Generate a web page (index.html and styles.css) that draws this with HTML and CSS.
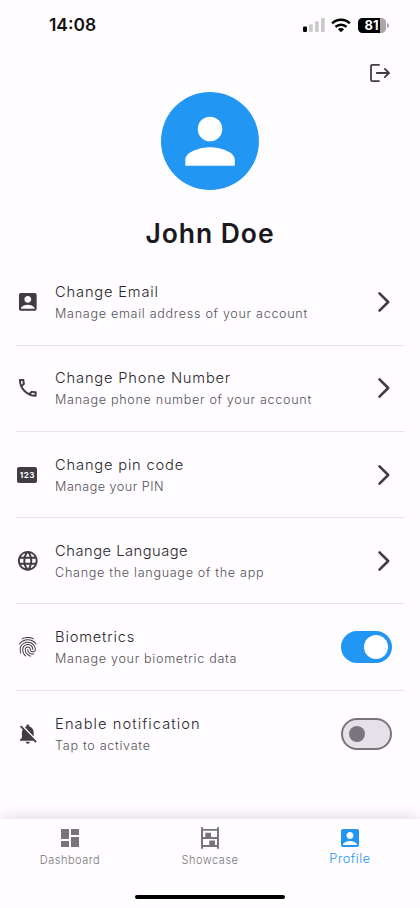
FILE: index.html
```html
<!DOCTYPE html>
<html lang="en">
<head>
<meta charset="utf-8">
<title>Profile</title>
<link rel="stylesheet" href="styles.css">
</head>
<body>
<div class="app">
  <header class="status">
    <span class="time">14:08</span>
    <div class="indicators">
      <svg width="22" height="14" viewBox="0 0 22 14"><rect x="0" y="8.5" width="4" height="5.5" rx="1.2" fill="#000"/><g fill="#ccc9cd"><rect x="6" y="6.2" width="3.8" height="7.8" rx="1"/><rect x="12" y="3.2" width="3.8" height="10.8" rx="1"/><rect x="18" y="0" width="3.8" height="14" rx="1"/></g></svg>
      <svg class="wifi" width="20" height="15" viewBox="0 0 20 15"><g fill="none" stroke="#000" stroke-width="2.5"><path d="M1.2 5.4a12.5 12.5 0 0 1 17.6 0"/><path d="M4.5 8.9a7.8 7.8 0 0 1 11 0"/></g><path d="M6.9 11.2a4.4 4.4 0 0 1 6.2 0L10 14.2z"/></svg>
      <div class="battery"><span>81</span></div><i class="battery-tip"></i>
    </div>
  </header>
  <div class="toolbar">
    <svg width="22" height="20" viewBox="0 0 22 20" fill="none" stroke="#3f3c43" stroke-width="1.8" stroke-linecap="round" stroke-linejoin="round"><path d="M10 1.9H3.4Q2 1.9 2 3.3v13.4q0 1.4 1.4 1.4H10M7.8 10h12M15.8 5.9 20 10l-4.200 4.100"/></svg>
  </div>
  <section class="profile">
    <div class="avatar"><svg width="98" height="98" viewBox="0 0 98 98" fill="#fff"><circle cx="49" cy="37" r="12.300"/><path d="M24.300 73.700v-6C24.300 60 39 55.300 49 55.300S73.800 60 73.800 67.700v6z"/></svg></div>
    <h1>John Doe</h1>
  </section>
  <main class="settings">
    <div class="row">
      <svg class="icon" viewBox="0 0 24 24"><path d="M19 3H5c-1.100 0-2 .9-2 2v14c0 1.100.9 2 2 2h14c1.100 0 2-.9 2-2V5c0-1.100-.9-2-2-2zm-7 3c1.930 0 3.500 1.570 3.500 3.500S13.930 13 12 13s-3.500-1.570-3.500-3.500S10.070 6 12 6zm7 13H5v-.23c0-.62.28-1.200.76-1.580C7.470 15.820 9.640 15 12 15s4.530.82 6.240 2.190c.48.38.76.97.76 1.580V19z"/></svg>
      <div class="copy"><h2>Change Email</h2><p>Manage email address of your account</p></div>
      <svg class="chevron" viewBox="0 0 14 22"><path d="m2.500 2.300 8.700 8.700-8.700 8.700"/></svg>
    </div>
    <div class="row">
      <svg class="icon" viewBox="0 0 24 24"><path d="M6.540 5c.06.89.21 1.760.45 2.590l-1.200 1.200c-.41-1.200-.67-2.470-.76-3.790h1.510m9.860 12.020c.85.24 1.720.39 2.600.45v1.490c-1.320-.09-2.590-.35-3.800-.75l1.200-1.190M7.500 3H4c-.55 0-1 .45-1 1 0 9.390 7.610 17 17 17 .55 0 1-.45 1-1v-3.490c0-.55-.45-1-1-1-1.240 0-2.450-.2-3.570-.57-.1-.04-.21-.05-.31-.05-.26 0-.51.1-.71.29l-2.200 2.200c-2.830-1.450-5.150-3.760-6.590-6.590l2.200-2.200c.28-.28.36-.67.25-1.020C8.700 6.450 8.500 5.250 8.500 4c0-.55-.45-1-1-1z"/></svg>
      <div class="copy"><h2>Change Phone Number</h2><p>Manage phone number of your account</p></div>
      <svg class="chevron" viewBox="0 0 14 22"><path d="m2.500 2.300 8.700 8.700-8.700 8.700"/></svg>
    </div>
    <div class="row">
      <div class="icon"><span class="pin">123</span></div>
      <div class="copy"><h2>Change pin code</h2><p class="snug">Manage your PIN</p></div>
      <svg class="chevron" viewBox="0 0 14 22"><path d="m2.500 2.300 8.700 8.700-8.700 8.700"/></svg>
    </div>
    <div class="row">
      <svg class="icon" viewBox="0 0 24 24"><path d="M11.990 2C6.470 2 2 6.480 2 12s4.470 10 9.990 10C17.520 22 22 17.520 22 12S17.520 2 11.990 2zm6.930 6h-2.950c-.32-1.250-.78-2.450-1.380-3.560 1.840.63 3.370 1.910 4.330 3.560zM12 4.040c.83 1.200 1.480 2.530 1.910 3.960h-3.820c.43-1.430 1.080-2.760 1.910-3.960zM4.260 14C4.100 13.360 4 12.690 4 12s.1-1.360.26-2h3.380c-.08.66-.14 1.320-.14 2 0 .68.06 1.340.14 2H4.260zm.82 2h2.950c.32 1.250.78 2.450 1.380 3.560-1.840-.63-3.370-1.900-4.330-3.560zm2.950-8H5.080c.96-1.660 2.490-2.930 4.330-3.560C8.810 5.550 8.350 6.750 8.030 8zM12 19.960c-.83-1.200-1.480-2.530-1.910-3.960h3.820c-.43 1.430-1.080 2.760-1.910 3.960zM14.340 14H9.660c-.09-.66-.16-1.320-.16-2 0-.68.07-1.350.16-2h4.680c.09.65.16 1.320.16 2 0 .68-.07 1.340-.16 2zm.25 5.560c.6-1.110 1.060-2.310 1.380-3.560h2.950c-.96 1.650-2.490 2.930-4.330 3.560zM16.360 14c.08-.66.14-1.320.14-2 0-.68-.06-1.340-.14-2h3.380c.16.64.26 1.310.26 2s-.1 1.360-.26 2h-3.380z"/></svg>
      <div class="copy"><h2 class="snug">Change Language</h2><p>Change the language of the app</p></div>
      <svg class="chevron" viewBox="0 0 14 22"><path d="m2.500 2.300 8.700 8.700-8.700 8.700"/></svg>
    </div>
    <div class="row">
      <svg class="icon" viewBox="0 0 24 24"><path d="M17.810 4.470c-.08 0-.16-.02-.23-.06C15.660 3.420 14 3 12.010 3c-1.980 0-3.860.47-5.570 1.410-.24.13-.54.04-.68-.2-.13-.24-.04-.55.2-.68C7.820 2.520 9.860 2 12.010 2c2.130 0 3.990.47 6.030 1.520.25.13.34.43.21.67-.09.18-.26.28-.44.28zM3.500 9.720c-.1 0-.2-.03-.29-.09-.23-.16-.28-.47-.12-.7.99-1.400 2.250-2.500 3.750-3.270C9.980 4.040 14 4.030 17.150 5.650c1.500.77 2.760 1.860 3.750 3.250.16.22.11.54-.12.7-.23.16-.54.11-.7-.12-.9-1.260-2.040-2.250-3.390-2.940-2.870-1.470-6.540-1.470-9.400.01-1.360.7-2.500 1.700-3.400 2.960-.08.14-.23.21-.39.21zm6.250 12.070c-.13 0-.26-.05-.35-.15-.87-.87-1.340-1.430-2.010-2.640-.69-1.230-1.050-2.730-1.050-4.340 0-2.970 2.540-5.390 5.660-5.390s5.660 2.420 5.660 5.390c0 .28-.22.5-.5.5s-.5-.22-.5-.5c0-2.420-2.090-4.390-4.660-4.390-2.570 0-4.660 1.970-4.660 4.390 0 1.440.32 2.770.93 3.850.64 1.150 1.080 1.640 1.850 2.420.19.2.19.51 0 .71-.11.1-.24.15-.37.15zm7.170-1.850c-1.190 0-2.240-.3-3.100-.89-1.490-1.010-2.380-2.650-2.380-4.390 0-.28.22-.5.5-.5s.5.22.5.5c0 1.410.72 2.740 1.940 3.560.71.48 1.540.71 2.540.71.24 0 .64-.03 1.040-.1.27-.05.53.13.58.41.05.27-.13.53-.41.58-.57.11-1.070.12-1.210.12zM14.910 22c-.04 0-.09-.01-.13-.02-1.590-.44-2.630-1.030-3.720-2.100-1.400-1.390-2.170-3.240-2.170-5.220 0-1.620 1.380-2.940 3.080-2.940 1.700 0 3.080 1.320 3.080 2.940 0 1.070.93 1.940 2.080 1.940s2.080-.87 2.080-1.940c0-3.770-3.250-6.830-7.250-6.830-2.840 0-5.440 1.580-6.610 4.030-.39.81-.59 1.760-.59 2.800 0 .78.07 2.010.67 3.610.1.26-.03.55-.29.64-.26.1-.55-.04-.64-.29-.49-1.310-.73-2.610-.73-3.960 0-1.200.23-2.290.68-3.240 1.330-2.790 4.280-4.600 7.510-4.600 4.550 0 8.250 3.510 8.250 7.830 0 1.620-1.380 2.940-3.080 2.940s-3.080-1.320-3.080-2.940c0-1.070-.93-1.940-2.080-1.940s-2.080.87-2.080 1.940c0 1.710.66 3.310 1.870 4.510.95.94 1.860 1.460 3.270 1.850.27.07.42.35.35.61-.05.23-.26.38-.47.38z"/></svg>
      <div class="copy"><h2>Biometrics</h2><p>Manage your biometric data</p></div>
      <div class="switch on"><i></i></div>
    </div>
    <div class="row">
      <svg class="icon" viewBox="0 0 24 24"><path d="M20 18.690L7.840 6.140 5.270 3.490 4 4.760l2.800 2.800v.01c-.52.99-.8 2.160-.8 3.420v5l-2 2v1h13.730l2 2L21 19.720l-1-1.030zM12 22c1.110 0 2-.89 2-2h-4c0 1.110.89 2 2 2zm6-7.320V11c0-3.080-1.640-5.640-4.500-6.320V4c0-.83-.67-1.500-1.500-1.500s-1.500.67-1.500 1.500v.68c-.15.03-.29.08-.42.12-.1.03-.2.07-.3.11-.24.1-.48.21-.71.32L18 14.680z"/></svg>
      <div class="copy"><h2 class="loose">Enable notification</h2><p>Tap to activate</p></div>
      <div class="switch"><i></i></div>
    </div>
  </main>
  <nav class="tabs">
    <div class="tab">
      <svg viewBox="0 0 24 24"><path d="M3 13h8V3H3v10zm0 8h8v-6H3v6zm10 0h8V11h-8v10zm0-18v6h8V3h-8z"/></svg>
      <span>Dashboard</span>
    </div>
    <div class="tab">
      <svg viewBox="0 0 24 24"><path d="M3 1.200h2V3H19V1.200h2v21.600h-2V21H5v1.800H3zM5 4.800v6.200h2.300V6.700H13V11h6V4.800zM5 13v6h6.300v-4.500H17V19h2v-6z"/></svg>
      <span>Showcase</span>
    </div>
    <div class="tab active">
      <svg viewBox="0 0 24 24"><path d="M19 3H5c-1.100 0-2 .9-2 2v14c0 1.100.9 2 2 2h14c1.100 0 2-.9 2-2V5c0-1.100-.9-2-2-2zm-7 3c1.930 0 3.500 1.570 3.500 3.500S13.930 13 12 13s-3.500-1.570-3.500-3.500S10.070 6 12 6zm7 13H5v-.23c0-.62.28-1.200.76-1.580C7.470 15.820 9.640 15 12 15s4.530.82 6.240 2.190c.48.38.76.97.76 1.580V19z"/></svg>
      <span>Profile</span>
    </div>
    <div class="home"></div>
  </nav>
</div>
</body>
</html>
```
FILE: styles.css
```css
* { box-sizing: border-box; }
body { margin: 0; background: #fffdff; color: #29272c; font-family: Inter, "Liberation Sans", sans-serif; }
h1, h2, p { margin: 0; }
svg { display: block; flex: none; }
.app { width: 420px; height: 908px; display: flex; flex-direction: column; overflow: hidden; }
.status { height: 50px; padding: 0 31px 0 49px; display: flex; align-items: center; justify-content: space-between; }
.time { font-size: 17.4px; line-height: 22px; padding-bottom: 1px; font-weight: 600; color: #111; }
.indicators { display: flex; align-items: center; }
.wifi { margin: 0 7px 0 6px; }
.battery { width: 28px; height: 15px; border-radius: 4.5px; background: linear-gradient(90deg, #000 80%, #aaa7ab 80%); color: #fff; font-size: 13px; font-weight: 700; line-height: 15px; text-align: center; }
.battery span { margin-right: 1px; }
.battery-tip { width: 2px; height: 5px; margin-left: 1px; border-radius: 0 2px 2px 0; background: #aaa7ab; }
.toolbar { height: 42px; padding: 13.4px 29px 0 0; display: flex; justify-content: flex-end; }
.profile { height: 167.4px; display: flex; flex-direction: column; align-items: center; }
.avatar { width: 98px; height: 98px; border-radius: 50%; background: #2196f3; }
h1 { margin-top: 26px; font-size: 26.5px; line-height: 35px; font-weight: 600; letter-spacing: .95px; color: #1b191e; white-space: nowrap; }
.settings { padding: 0 15.500px; flex: none; }
.row { height: 86.25px; display: flex; align-items: center; border-bottom: 1px solid #e8e5ea; padding: 0 12.5px 0 0; }
.row:last-child { border-bottom: 0; }
.icon { width: 23.6px; height: 23.6px; margin-right: 16px; fill: #3f3c43; flex: none; display: flex; align-items: center; justify-content: center; }
.pin { width: 20px; height: 16px; border-radius: 2px; background: #3f3c43; color: #fff; font-size: 8px; line-height: 16px; font-weight: 700; letter-spacing: .4px; text-align: center; }
.copy { flex: 1; white-space: nowrap; }
h2 { font-size: 14.7px; line-height: 23px; font-weight: 350; letter-spacing: .8px; }
p { font-size: 12.6px; line-height: 19px; font-weight: 350; letter-spacing: .69px; color: #545158; }
h2.snug { letter-spacing: .5px; }
h2.loose { letter-spacing: 1.05px; }
p.snug { letter-spacing: .5px; }
.chevron { width: 14px; height: 22px; margin-right: .8px; fill: none; stroke: #3f3c43; stroke-width: 2.6; stroke-linecap: round; stroke-linejoin: round; }
.switch { width: 51px; height: 32px; border: 2px solid #797479; border-radius: 16px; background: #e6e0e9; padding: 0 6px; display: flex; align-items: center; }
.switch i { width: 16px; height: 16px; border-radius: 50%; background: #7c757d; }
.switch.on { background: #2196f3; border-color: #2196f3; padding: 0 2px; justify-content: flex-end; }
.switch.on i { width: 24px; height: 24px; background: #fff; }
.tabs { height: 89px; margin-top: auto; display: grid; grid-template-columns: repeat(3, 1fr); grid-template-rows: 76px 6px; background: #fffdff; box-shadow: 0 -2px 14px rgba(0, 0, 0, .13); }
.tab { display: flex; flex-direction: column; align-items: center; padding-top: 6.5px; color: #77757a; font-size: 11px; line-height: 16px; font-weight: 350; letter-spacing: .5px; }
.tab svg { width: 24px; height: 24px; fill: currentColor; margin-bottom: 2.5px; }
.tab.active { color: #2196f3; font-size: 12.8px; }
.tab.active svg { margin-bottom: 1.5px; }
.home { grid-column: 1 / -1; justify-self: center; width: 150px; height: 4px; border-radius: 3px; background: #000; }
```
